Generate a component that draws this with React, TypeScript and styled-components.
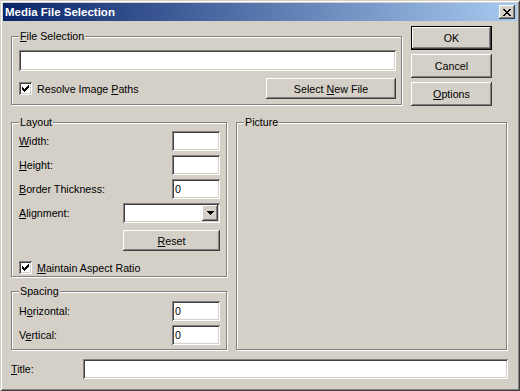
import React from "react";
import styled, { createGlobalStyle, css } from "styled-components";

const FACE = "#D4D0C8";

const GlobalStyle = createGlobalStyle`
  html, body {
    margin: 0;
    padding: 0;
    background: ${FACE};
  }
  body {
    font-family: "Liberation Sans", Arial, sans-serif;
    font-size: 10.7px;
    color: #000;
  }
  * {
    box-sizing: border-box;
  }
`;

const raised = css`
  box-shadow: inset -1px -1px 0 #404040, inset 1px 1px 0 #fff,
    inset -2px -2px 0 #808080, inset 2px 2px 0 ${FACE};
`;

const sunken = css`
  box-shadow: inset 1px 1px 0 #808080, inset -1px -1px 0 #fff,
    inset 2px 2px 0 #404040, inset -2px -2px 0 ${FACE};
`;

const Window = styled.div`
  width: 520px;
  height: 391px;
  padding: 3px;
  background: ${FACE};
  display: flex;
  flex-direction: column;
  box-shadow: inset 1px 1px 0 ${FACE}, inset -1px -1px 0 #404040,
    inset 2px 2px 0 #fff, inset -2px -2px 0 #808080;
`;

const TitleBar = styled.div`
  height: 18px;
  flex-shrink: 0;
  display: flex;
  align-items: center;
  justify-content: space-between;
  padding: 0 2px;
  background: linear-gradient(to right, #0a246a, #a6caf0);
`;

const TitleText = styled.span`
  color: #fff;
  font-weight: bold;
  font-size: 11.5px;
  line-height: 18px;
  white-space: nowrap;
`;

const CloseButton = styled.button`
  width: 16px;
  height: 14px;
  padding: 0;
  border: none;
  background: ${FACE};
  display: flex;
  align-items: center;
  justify-content: center;
  ${raised};
  svg {
    display: block;
    margin: 0 0 0 -1px;
  }
`;

const Body = styled.div`
  flex: 1;
  display: flex;
  flex-direction: column;
  padding: 5px 9px 0 8px;
`;

const TopRow = styled.div`
  display: flex;
  align-items: flex-start;
  gap: 9px;
`;

const MiddleRow = styled.div`
  display: flex;
  align-items: flex-start;
  gap: 9px;
  margin-top: 10px;
`;

const Column = styled.div`
  display: flex;
  flex-direction: column;
  gap: 8px;
`;

const Group = styled.fieldset<{ $w: number; $h: number; $pad: string; $mt?: number }>`
  margin: ${(p) => p.$mt || 0}px 0 0 0;
  padding: ${(p) => p.$pad};
  width: ${(p) => p.$w}px;
  height: ${(p) => p.$h}px;
  min-width: 0;
  border: 1px solid #808080;
  box-shadow: inset 1px 1px 0 #fff, 1px 1px 0 #fff;
`;

const Legend = styled.legend`
  padding: 0 1px;
  line-height: 13px;
  background: ${FACE};
`;

const Stack = styled.div`
  display: flex;
  flex-direction: column;
`;

const Row = styled.div<{ $mt?: number; $h?: number; $end?: boolean }>`
  display: flex;
  align-items: center;
  justify-content: ${(p) => (p.$end ? "flex-end" : "space-between")};
  height: ${(p) => p.$h || 20}px;
  margin-top: ${(p) => p.$mt || 0}px;
`;

const Label = styled.span`
  white-space: nowrap;
`;

const Key = styled.span`
  text-decoration: underline;
  text-underline-offset: 1px;
`;

const TextBox = styled.input<{ $w?: number; $h?: number; $grow?: boolean }>`
  appearance: none;
  border: none;
  outline: none;
  margin: 0;
  background: #fff;
  width: ${(p) => (p.$w ? `${p.$w}px` : "100%")};
  height: ${(p) => p.$h || 20}px;
  flex: ${(p) => (p.$grow ? "1 1 auto" : "none")};
  padding: 0 3px;
  font: inherit;
  color: #000;
  -webkit-text-fill-color: #000;
  ${sunken};
`;

const Button = styled.button<{ $w: number; $h: number; $default?: boolean }>`
  width: ${(p) => p.$w}px;
  height: ${(p) => p.$h}px;
  padding: 0;
  margin: 0;
  font: inherit;
  color: #000;
  background: ${FACE};
  border: ${(p) => (p.$default ? "1px solid #000" : "none")};
  ${raised};
`;

const ButtonColumn = styled.div`
  display: flex;
  flex-direction: column;
  gap: 4px;
`;

const CheckRow = styled.label<{ $mt?: number }>`
  display: flex;
  align-items: center;
  gap: 5px;
  height: 13px;
  margin-top: ${(p) => p.$mt || 0}px;
`;

const CheckBox = styled.span`
  width: 13px;
  height: 13px;
  flex: none;
  background: #fff;
  display: flex;
  align-items: center;
  justify-content: center;
  ${sunken};
`;

const Combo = styled.div`
  width: 97px;
  height: 20px;
  background: #fff;
  display: flex;
  justify-content: flex-end;
  align-items: center;
  padding: 2px;
  ${sunken};
`;

const DropButton = styled.span`
  width: 16px;
  height: 16px;
  background: ${FACE};
  display: flex;
  align-items: center;
  justify-content: center;
  ${raised};
`;

const TitleRow = styled.div`
  display: flex;
  align-items: center;
  margin-top: 9px;
`;

const TitleLabel = styled.span`
  width: 72px;
  flex: none;
`;

const Pixels = ({ cells, w, h }: { cells: [number, number, number][]; w: number; h: number }) => (
  <svg width={w} height={h} viewBox={`0 0 ${w} ${h}`} shapeRendering="crispEdges">
    {cells.map(([x, y, len], i) => (
      <rect key={i} x={x} y={y} width={len} height={1} fill="#000" />
    ))}
  </svg>
);

const checkCells: [number, number, number][] = [
  [6, 0, 1],
  [5, 1, 2],
  [0, 2, 1],
  [4, 2, 3],
  [0, 3, 2],
  [3, 3, 3],
  [0, 4, 5],
  [1, 5, 3],
  [2, 6, 1],
];

const closeCells: [number, number, number][] = [
  [0, 0, 2],
  [6, 0, 2],
  [1, 1, 2],
  [5, 1, 2],
  [2, 2, 4],
  [3, 3, 2],
  [2, 4, 4],
  [1, 5, 2],
  [5, 5, 2],
  [0, 6, 2],
  [6, 6, 2],
];

const arrowCells: [number, number, number][] = [
  [0, 0, 7],
  [1, 1, 5],
  [2, 2, 3],
  [3, 3, 1],
];

const Check = () => (
  <CheckBox>
    <Pixels cells={checkCells} w={7} h={7} />
  </CheckBox>
);

export default function App() {
  return (
    <>
      <GlobalStyle />
      <Window>
        <TitleBar>
          <TitleText>Media File Selection</TitleText>
          <CloseButton>
            <Pixels cells={closeCells} w={8} h={7} />
          </CloseButton>
        </TitleBar>
        <Body>
          <TopRow>
            <Group $w={391} $h={75} $pad="7px 5px 5px 7px" $mt={4}>
              <Legend>
                <Key>F</Key>ile Selection
              </Legend>
              <Stack>
                <TextBox $h={21} readOnly />
                <Row $h={21} $mt={7}>
                  <CheckRow>
                    <Check />
                    <Label>
                      Resolve Image <Key>P</Key>aths
                    </Label>
                  </CheckRow>
                  <Button $w={130} $h={21}>
                    Select <Key>N</Key>ew File
                  </Button>
                </Row>
              </Stack>
            </Group>
            <ButtonColumn>
              <Button $w={81} $h={24} $default>
                OK
              </Button>
              <Button $w={81} $h={24}>
                Cancel
              </Button>
              <Button $w={81} $h={24}>
                <Key>O</Key>ptions
              </Button>
            </ButtonColumn>
          </TopRow>

          <MiddleRow>
            <Column>
              <Group $w={216} $h={161} $pad="2px 6px 2px 7px">
                <Legend>Layout</Legend>
                <Stack>
                  <Row>
                    <Label>
                      <Key>W</Key>idth:
                    </Label>
                    <TextBox $w={48} readOnly />
                  </Row>
                  <Row $mt={4}>
                    <Label>
                      <Key>H</Key>eight:
                    </Label>
                    <TextBox $w={48} readOnly />
                  </Row>
                  <Row $mt={4}>
                    <Label>
                      <Key>B</Key>order Thickness:
                    </Label>
                    <TextBox $w={48} value="0" readOnly />
                  </Row>
                  <Row $mt={4}>
                    <Label>
                      <Key>A</Key>lignment:
                    </Label>
                    <Combo>
                      <DropButton>
                        <Pixels cells={arrowCells} w={7} h={4} />
                      </DropButton>
                    </Combo>
                  </Row>
                  <Row $mt={7} $h={21} $end>
                    <Button $w={97} $h={21}>
                      <Key>R</Key>eset
                    </Button>
                  </Row>
                  <CheckRow $mt={10}>
                    <Check />
                    <Label>
                      <Key>M</Key>aintain Aspect Ratio
                    </Label>
                  </CheckRow>
                </Stack>
              </Group>
              <Group $w={216} $h={65} $pad="3px 6px 4px 7px">
                <Legend>Spacing</Legend>
                <Stack>
                  <Row>
                    <Label>
                      H<Key>o</Key>rizontal:
                    </Label>
                    <TextBox $w={48} value="0" readOnly />
                  </Row>
                  <Row $mt={4}>
                    <Label>
                      V<Key>e</Key>rtical:
                    </Label>
                    <TextBox $w={48} value="0" readOnly />
                  </Row>
                </Stack>
              </Group>
            </Column>
            <Group $w={271} $h={234} $pad="2px 7px 2px 7px">
              <Legend>Picture</Legend>
            </Group>
          </MiddleRow>

          <TitleRow>
            <TitleLabel>
              <Key>T</Key>itle:
            </TitleLabel>
            <TextBox $grow readOnly />
          </TitleRow>
        </Body>
      </Window>
    </>
  );
}
